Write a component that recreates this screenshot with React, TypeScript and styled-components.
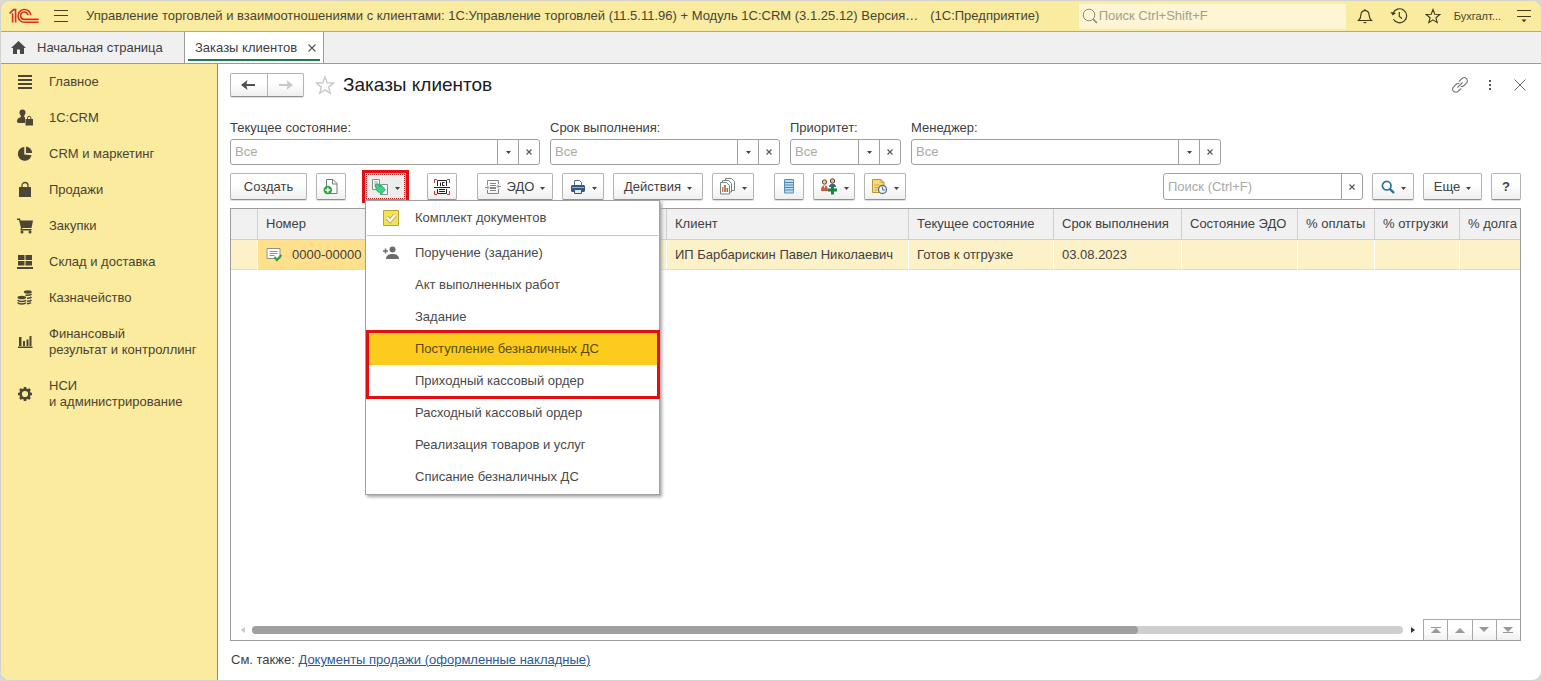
import React from 'react';
import styled, { createGlobalStyle, css } from 'styled-components';

const GlobalStyle = createGlobalStyle`
  * { box-sizing: border-box; }
  body {
    margin: 0;
    background: #d6d9d0;
    font-family: "Liberation Sans", Arial, sans-serif;
    font-size: 13px;
    line-height: 16px;
    color: #404040;
  }
  button, input { font: inherit; color: inherit; }
  svg { display: block; flex: none; }
`;

const Window = styled.div`
  display: flex;
  flex-direction: column;
  min-height: 100vh;
  border: 1px solid #d3d3cc;
  border-radius: 10px;
  overflow: hidden;
  background: #fff;
`;

const TitleBar = styled.header`
  display: flex;
  align-items: center;
  height: 31px;
  padding: 0 9px 0 8px;
  background: #f9eb9f;
  border-bottom: 1px solid #b5aa72;
`;

const PlainButton = styled.button`
  display: flex;
  align-items: center;
  justify-content: center;
  padding: 0;
  border: 0;
  background: none;
`;

const MenuToggle = styled(PlainButton)`
  margin: 0 18px 0 15px;
`;

const AppTitle = styled.div`
  flex: 1;
  display: flex;
  gap: 12px;
  min-width: 0;
  overflow: hidden;
  white-space: nowrap;
  color: #4a4432;
`;

const GlobalSearch = styled.label`
  display: flex;
  align-items: center;
  width: 267px;
  height: 25px;
  padding-left: 3px;
  background: #fdf5d3;
  input {
    flex: 1;
    min-width: 0;
    padding: 0 1px;
    border: 0;
    background: none;
    outline: 0;
  }
  input::placeholder { color: #a39f8c; opacity: 1; }
`;

const TitleTools = styled.div`
  display: flex;
  align-items: center;
  gap: 17px;
  margin-left: 11px;
`;

const UserButton = styled(PlainButton)`
  margin: 0 -2px 0 -4px;
  font-size: 11px;
  color: #4a4432;
`;

const TabBar = styled.nav`
  display: flex;
  height: 32px;
  background: #f1f0f0;
  border-bottom: 1px solid #9a9a9a;
`;

const HomeTab = styled(PlainButton)`
  width: 183px;
  justify-content: flex-start;
  gap: 11px;
  padding-left: 10px;
`;

const ActiveTab = styled.div`
  display: flex;
  align-items: center;
  justify-content: space-between;
  width: 140px;
  padding: 0 7px 0 10px;
  position: relative;
  background: #fff;
  border: solid #9a9a9a;
  border-width: 0 1px;
  white-space: nowrap;
  &::after {
    content: "";
    position: absolute;
    left: 3px;
    right: 3px;
    bottom: 2px;
    height: 2px;
    background: #1d7d50;
  }
`;

const Body = styled.div`
  flex: 1;
  display: flex;
`;

const Sidebar = styled.nav`
  flex: none;
  width: 217px;
  background: #faeb9f;
  border-right: 1px solid #8f8a6c;
`;

const SideItem = styled.a`
  display: flex;
  align-items: center;
  gap: 15px;
  padding: 10px 8px 10px 15px;
  color: #4a4330;
  text-decoration: none;
  white-space: pre-line;
  svg { margin: -1px 0; }
`;

const Main = styled.main`
  flex: 1;
  display: flex;
  flex-direction: column;
  min-width: 0;
  padding: 9px 20px 12px 12px;
`;

const PageHead = styled.div`
  display: flex;
  align-items: center;
  height: 24px;
`;

const raised = css`
  border: 1px solid #b4b4b4;
  border-bottom-color: #909090;
  border-radius: 2px;
  background: linear-gradient(#fff 40%, #efefef);
  box-shadow: 0 1px 1px #dcdcdc;
`;

const NavPair = styled.div`
  display: flex;
  width: 74px;
  height: 24px;
  ${raised}
`;

const NavButton = styled(PlainButton)`
  flex: 1;
  & + & { border-left: 1px solid #b4b4b4; }
`;

const FavButton = styled(PlainButton)`
  margin: 0 8px 0 11px;
`;

const PageTitle = styled.h1`
  flex: 1;
  margin: 0;
  font-size: 19px;
  line-height: 24px;
  font-weight: 400;
  color: #1c1c1c;
`;

const HeadTools = styled.div`
  display: flex;
  gap: 14px;
  margin-right: -7px;
  button { width: 16px; }
`;

const Filters = styled.div`
  display: flex;
  gap: 10px;
  margin-top: 23px;
`;

const Filter = styled.div<{ $w: number }>`
  display: flex;
  flex-direction: column;
  gap: 3px;
  width: ${p => p.$w}px;
  white-space: nowrap;
`;

const FieldBox = styled.div<{ $h: number }>`
  display: flex;
  width: 100%;
  height: ${p => p.$h}px;
  border: 1px solid #a0a0a0;
  border-radius: 3px;
  background: #fff;
  input {
    flex: 1;
    min-width: 0;
    padding: 0 4px;
    border: 0;
    background: none;
    outline: 0;
  }
  input::placeholder { color: #a9a9a9; opacity: 1; }
  button {
    width: 21px;
    border-left: 1px solid #a0a0a0;
  }
`;

const Toolbar = styled.div`
  display: flex;
  align-items: center;
  gap: 9px;
  height: 27px;
  margin-top: 8px;
`;

const Group = styled.div<{ $before?: number }>`
  display: flex;
  gap: 9px;
  margin-left: ${p => p.$before ?? 0}px;
`;

const ToolButton = styled.button<{ $w: number; $focused?: boolean }>`
  display: flex;
  align-items: center;
  justify-content: center;
  gap: 6px;
  width: ${p => p.$w}px;
  height: 27px;
  padding: 0;
  white-space: nowrap;
  ${raised}
  ${p => p.$focused && css`
    background: #ededed;
    box-shadow: none;
    outline: 1px dotted #b02020;
    outline-offset: -2px;
  `}
`;

const Highlight = styled.div`
  position: relative;
  margin: -3px -1px -3px 7px;
  border: 3px solid #e00f12;
`;

const ToolSearch = styled.div`
  width: 200px;
  margin-left: auto;
`;

const Menu = styled.div`
  position: absolute;
  z-index: 5;
  top: 27px;
  left: 0;
  width: 295px;
  padding: 1px;
  background: #fff;
  border: 1px solid #a0a0a0;
  box-shadow: 2px 2px 3px #a8a8a8;
`;

const MenuItem = styled.button<{ $active?: boolean }>`
  display: flex;
  align-items: center;
  width: 100%;
  height: 32px;
  padding: 0;
  border: 0;
  text-align: left;
  background: ${p => (p.$active ? '#fbcb1e' : 'none')};
  color: ${p => (p.$active ? '#5a4a10' : '#4a4a4a')};
`;

const MenuIcon = styled.span`
  flex: none;
  width: 48px;
  display: flex;
  justify-content: center;
`;

const Separator = styled.hr`
  height: 1px;
  margin: 1px 0;
  border: 0;
  background: #c4c4c4;
`;

const Marked = styled.div`
  position: relative;
  &::after {
    content: "";
    position: absolute;
    inset: -3px -2px -2px -1px;
    border: 3px solid #e00f12;
    pointer-events: none;
  }
`;

const ListPanel = styled.section`
  flex: 1;
  display: flex;
  flex-direction: column;
  margin-top: 8px;
  border: 1px solid #9c9c9c;
  overflow: hidden;
`;

const Grid = styled.table`
  width: 100%;
  table-layout: fixed;
  border-collapse: separate;
  border-spacing: 0;
  th, td {
    height: 31px;
    padding: 0 0 0 8px;
    overflow: hidden;
    white-space: nowrap;
    text-align: left;
    font-weight: 400;
    border-right: 1px solid #fff;
  }
  th {
    background: #f2f1f2;
    border-right-color: #cfcfcf;
    border-bottom: 1px solid #d0d0d0;
  }
  td {
    height: 30px;
    background: #fdf1c8;
    border-bottom: 1px solid #e2dcc8;
  }
  th:last-child, td:last-child { border-right: 0; }
`;

const CurrentCell = styled.td`
  && { background: #ffe08d; }
`;

const CellContent = styled.span`
  display: flex;
  align-items: center;
  gap: 10px;
`;

const ScrollRow = styled.div`
  display: flex;
  align-items: center;
  height: 21px;
  margin-top: auto;
  padding-left: 8px;
`;

const Track = styled.div`
  flex: 1;
  height: 8px;
  margin: 0 7px 0 6px;
  border-radius: 4px;
  background: #d0cfd0;
`;

const Thumb = styled.div`
  width: 77%;
  height: 8px;
  border-radius: 4px;
  background: #a09fa0;
`;

const Pager = styled.div`
  display: grid;
  grid-template-columns: repeat(4, 1fr);
  width: 97px;
  height: 21px;
  margin-left: 7px;
  border-top: 1px solid #a8a8a8;
  button {
    border-left: 1px solid #a8a8a8;
    background: linear-gradient(#fff 40%, #f0f0f0);
  }
`;

const SeeAlso = styled.p`
  margin: 11px 0 0 1px;
  a { color: #2a5a94; }
`;

const Logo = () => (
  <svg width="30" height="16" viewBox="0 0 30 16" fill="none" stroke="#d5311d" strokeWidth="1.6">
    <path d="M.6 5.4 4.6 1.6h2v13M3.6 5.2v9.4" />
    <path d="M21.8 7.2A6.4 6.4 0 1 0 15.4 14.3H29.6" />
    <path d="M19 7.2A3.7 3.7 0 1 0 15.4 11.4H29.6" />
  </svg>
);
const Lines = () => (
  <svg width="14" height="14" viewBox="0 0 14 14" stroke="#4a4020" strokeWidth="1"><path d="M0 1.5h14M0 6.500h14M0 12.500h14" /></svg>
);
const Lens = () => (
  <svg width="16" height="16" viewBox="0 0 16 16" fill="none" stroke="#8d8a78"><circle cx="7" cy="7" r="5.8" /><path d="m11 11 4 4" strokeWidth="1.6" /></svg>
);
const Bell = () => (
  <svg width="16" height="16" viewBox="0 0 16 16" fill="none" stroke="#40391c" strokeWidth="1.2">
    <path d="M1.5 12.5h13c-2-1.6-2.2-3-2.4-5.5C11.9 4.2 10.6 2.7 8 2.7S4.100 4.200 3.900 7c-.2 2.500-.4 3.900-2.400 5.500zM8 1v2" />
    <path d="M6 14h4l-2 1.600z" fill="#40391c" stroke="none" />
  </svg>
);
const History = () => (
  <svg width="18" height="16" viewBox="0 0 18 16" fill="none" stroke="#40391c" strokeWidth="1.2">
    <path d="M3 5.5A7 7 0 1 1 3.500 11.200M9.300 4v4.500l2.700 2" /><path d="m.5 4 2.200 3.500L6 5z" fill="#40391c" stroke="none" />
  </svg>
);
const Star = ({ size = 16, color = '#40391c' }: { size?: number; color?: string }) => (
  <svg width={size} height={size} viewBox="0 0 16 16" fill="none" stroke={color} strokeWidth="1.1" strokeLinejoin="miter">
    <path d="m8 1.500 1.800 4.700 5 .3-3.900 3.200 1.300 4.900L8 11.900l-4.200 2.700 1.300-4.900L1.200 6.500l5-.3z" />
  </svg>
);
const ServiceMenu = () => (
  <svg width="16" height="14" viewBox="0 0 16 14"><path d="M1 1.500h14M1 7.500h14" stroke="#40391c" /><path d="M5.500 10.500h5L8 13.300z" fill="#40391c" /></svg>
);
const Home = () => (
  <svg width="15" height="13" viewBox="0 0 15 13" fill="#484848"><path d="M7.500 0 15 7h-2v6H9V8.500H6V13H2V7H0z" /></svg>
);
const Cross = ({ size = 8, color = '#555', w = 1.1 }: { size?: number; color?: string; w?: number }) => (
  <svg width={size} height={size} viewBox={`0 0 ${size} ${size}`} stroke={color} strokeWidth={w}><path d={`M.5.5l${size - 1} ${size - 1}M${size - .5}.5l-${size - 1} ${size - 1}`} /></svg>
);
const Arrow = ({ left = false }: { left?: boolean }) => (
  <svg width="15" height="12" viewBox="0 0 15 12" fill={left ? '#505050' : '#c9c9c9'} transform={left ? undefined : 'scale(-1 1)'}>
    <path d="M0 6 6.500 1 5.500 4.900H14v2.200H5.500L6.500 11z" />
  </svg>
);
const Link = () => (
  <svg width="18" height="18" viewBox="0 0 24 24" fill="none" stroke="#777" strokeWidth="1.500" strokeLinecap="round">
    <path d="m9 15 6-6M11 7l3.500-3.500a4.200 4.200 0 0 1 6 6L17 13a4 4 0 0 1-3.500 1M13 17l-3.500 3.500a4.200 4.200 0 0 1-6-6L7 11a4 4 0 0 1 3.500-1" />
  </svg>
);
const Dots = () => (
  <svg width="14" height="14" viewBox="0 0 14 14" fill="#555"><path d="M6 2h2v2H6zM6 6h2v2H6zM6 10h2v2H6z" /></svg>
);
const Caret = () => (
  <svg width="5" height="3" viewBox="0 0 5 3" fill="#444"><path d="M0 0h5L2.500 3z" /></svg>
);
const ButtonCaret = styled(({ className }: { className?: string }) => (
  <span className={className}><Caret /></span>
))`
  padding-top: 4px;
`;

const sideIcons: Record<string, React.ReactNode> = {
  main: <path d="M2 2h14v2H2zM2 6h14v2H2zM2 10h14v2H2zM2 14h14v2H2z" />,
  crm: <><path d="M6.500.5a3 3 0 0 1 3 3c0 1.300-.6 2.300-1.300 3v1.300L9 8.200V14H2.500C1.500 14 1 13 1 12c0-2 1.500-3.300 3.800-4V6.500c-.8-.7-1.300-1.700-1.300-3a3 3 0 0 1 3-3z" /><path d="M9.500 10h7.500v6.500H9.500z" /><path d="M11.500 11V9a1.700 1.700 0 0 1 3.400 0v2" fill="none" stroke="#4d4536" /></>,
  pie: <><path d="M8.300 2a6.900 6.900 0 1 0 7.200 8.300L8.300 9.500z" /><path d="M10 1.500a6.600 6.600 0 0 1 6 6.500h-6z" /></>,
  bag: <><path d="M3 6h12v10H3z" /><path d="M6 8V4.500a3 3 0 0 1 6 0V8" fill="none" stroke="#4d4536" strokeWidth="1.3" /></>,
  cart: <><path d="M1 1.500h3l.6 2H17L15.500 11H6.200L6 12h9.500v1.500H4.400l.5-2.700L3 3H1z" /><circle cx="6" cy="15" r="1.500" /><circle cx="14" cy="15" r="1.500" /></>,
  stock: <path d="M2 2h6.500v5H2zM9.500 2H16v5H9.500zM2 8h6.500v4.500H2zM9.500 8H16v4.500H9.500zM1 14h16v2H1z" />,
  coins: <><ellipse cx="11.800" cy="3" rx="4" ry="1.700" /><ellipse cx="5.800" cy="8.500" rx="4.300" ry="1.800" /><path d="M15.500 5c-.8 1-3 1.400-6 1.200M15.500 8c-.7.9-2.300 1.300-4.500 1.300M15.500 11c-.7.9-2.300 1.300-4.500 1.300M1.700 11c1 1.900 7.200 1.900 8.200 0M1.700 13.500c1 1.900 7.200 1.900 8.200 0M11 14.600c2 0 3-.3 4-1" fill="none" stroke="#4d4536" strokeWidth="1.600" /></>,
  chart: <path d="M3 4h2.500v9H3zM7 8h2v5H7zM10.500 6.500h2V13h-2zM13.500 3h2v10h-2zM2 13.500h14.500V15H2z" />,
  gear: <><circle cx="9" cy="9" r="4.400" fill="none" stroke="#4d4536" strokeWidth="2.600" /><path d="M9 2V5M9 13v3M2 9H5M13 9h3M4 4l2 2M12 12l2 2M14 4l-2 2M6 12l-2 2" stroke="#4d4536" strokeWidth="2.600" /></>,
};
const SideIcon = ({ name }: { name: string }) => (
  <svg width="18" height="18" viewBox="0 0 18 18" fill="#4d4536">{sideIcons[name]}</svg>
);

const AddDoc = () => (
  <svg width="16" height="18" viewBox="0 0 16 18"><path d="M3.500 1.500h6.500l4 4v10h-10.500z" fill="#fff" stroke="#6e7f77" /><path d="M9.500 1.500V6H14" fill="none" stroke="#6e7f77" /><circle cx="4.800" cy="12" r="4.300" fill="#2ca33c" /><path d="M4.800 9.500v5M2.300 12h5" stroke="#fff" strokeWidth="1.500" /></svg>
);
const CreateFrom = () => (
  <svg width="18" height="18" viewBox="0 0 18 18"><path d="M1.500 1.500h7v10h-7z" fill="#fff" stroke="#7f8f88" /><path d="M3 4h4M3 6h4M3 8h2" stroke="#a5b0ab" /><path d="M10.500 6.500h6v10h-6z" fill="#fff" stroke="#7f8f88" /><path d="M4.500 6h3c0 1.500.5 2.500 2 2.500V6.500l5 5.200-5 5.300v-2.500C6 14.500 4.200 11 4.500 6z" fill="#3fd083" stroke="#26a465" strokeWidth=".8" /></svg>
);
const Barcode = () => (
  <svg width="18" height="18" viewBox="0 0 18 18" fill="none" stroke="#222"><path d="M4.500 8V2.500h9V8M4.500 11v4.500h9V11M1 9.500h16M6 11.500h6M6 13.500h6" /><path d="M7.500 4.500V8M11.500 4.500h-2v3h2" /><path d="M4 1.500H1.500V5M14 1.500h2.500V5M4 16.500H1.500V13M14 16.500h2.500V13" stroke="#c73838" /></svg>
);
const Edo = () => (
  <svg width="16" height="16" viewBox="0 0 16 16" fill="none" stroke="#858585"><path d="M2.500 6V1.500h11V5M2.500 11v3.500h11V10M5 4.500h6M5 6.500h6M5 9.500h6M5 11.500h6M0 8.500h3M13 7.500h3M5 8.500h6" /><path d="m2 6.500 2 2-2 2M14 5.500l-2 2 2 2" /></svg>
);
const Printer = () => (
  <svg width="16" height="16" viewBox="0 0 16 16"><path d="M4.500 1.500h5l2 2V7h-7z" fill="#fff" stroke="#53718f" /><path d="M2 6h12l1 1v5l-1 1H2l-1-1V7z" fill="#34597f" /><path d="M2 8.500h12" stroke="#8fb3d2" /><path d="M4.500 10.500h7v4h-7z" fill="#dcebf7" stroke="#35597d" /></svg>
);
const Reports = () => (
  <svg width="17" height="17" viewBox="0 0 17 17" fill="#fff" stroke="#77857e"><path d="M6.500.5h6l3 3v9h-9z" /><path d="M3.500 2.500h6l3 3v8.500h-9z" /><path d="M1.500 4.500h6l3 3v8.500h-9z" /><path d="M3.700 9v5" stroke="#d3803a" strokeWidth="1.500" /><path d="M6 7v7" stroke="#c2463c" strokeWidth="1.500" /><path d="M8.300 10v4" stroke="#3f9a4a" strokeWidth="1.500" /></svg>
);
const ListIcon = () => (
  <svg width="12" height="15" viewBox="0 0 12 15"><path d="M1.500.5h9v13.500h-9z" fill="#b9dcf3" stroke="#5b93b8" /><path d="M1.500 3.500h9M1.500 6h9M1.500 8.500h9M1.500 11h9" stroke="#5688ad" /></svg>
);
const People = () => (
  <svg width="18" height="17" viewBox="0 0 18 17"><circle cx="4.500" cy="4" r="2.200" fill="#efc18f" stroke="#6d4929" /><circle cx="12.500" cy="3" r="2.200" fill="#efc18f" stroke="#54391f" /><path d="M1 13c0-4 1.500-6 3.500-6S8 9 8 13z" fill="#c65a42" /><path d="M9 9c0-2 1.500-3.200 3.500-3.200S16 7 16 9z" fill="#405f8d" /><path d="M3.500 7.500h2l-1 3z" fill="#fff" /><path d="M12.500 7.500v9M8 12h9" stroke="#168540" strokeWidth="3" /></svg>
);
const NoteClock = () => (
  <svg width="17" height="17" viewBox="0 0 17 17"><path d="M1.500 1.500h8.500l3 3v10h-11.500z" fill="#f8da76" stroke="#b8943d" /><path d="M10 1.500v3h3M3.500 7h5M3.500 9.500h4M3.500 12h3" fill="none" stroke="#c9a348" /><circle cx="11.500" cy="11.500" r="4" fill="#eef4fa" stroke="#58718c" strokeWidth="1.300" /><path d="M11.500 9v3H14" fill="none" stroke="#58718c" /></svg>
);
const BlueLens = () => (
  <svg width="14" height="14" viewBox="0 0 14 14" fill="none" stroke="#2c7097"><circle cx="5.700" cy="5.700" r="4.300" strokeWidth="1.700" /><path d="m8.800 8.800 4.200 4.200" strokeWidth="2.400" /></svg>
);
const YellowCheck = () => (
  <svg width="16" height="16" viewBox="0 0 16 16"><path d="M.5.5h15v15H.5z" fill="#f5e44f" stroke="#b5a33e" /><path d="m4 7.500 3.200 3.300L12 5" fill="none" stroke="#a49a70" strokeWidth="4" /><path d="m4 7.500 3.200 3.300L12 5" fill="none" stroke="#fffdf0" strokeWidth="2.500" /></svg>
);
const AddPerson = () => (
  <svg width="16" height="14" viewBox="0 0 16 14" fill="#6b6b6b"><circle cx="9.500" cy="3.500" r="3" /><path d="M3 13c0-3.500 2.500-5 6.500-5s6.500 1.500 6.500 5z" /><path d="M2.500 2.500v5M0 5h5" stroke="#6b6b6b" strokeWidth="1.400" /></svg>
);
const OrderIcon = () => (
  <svg width="16" height="15" viewBox="0 0 16 15" fill="none"><path d="M1 1.500h13v10H1z" fill="#fff" stroke="#8b9487" /><path d="M3.500 4.500h8M3.500 6.500h8M3.500 8.500h5" stroke="#8b9487" /><path d="m8.500 10 2.500 3 4.500-5" stroke="#35a045" strokeWidth="2.200" /></svg>
);
const PageMark = ({ down = false, bar = false }: { down?: boolean; bar?: boolean }) => (
  <svg width="12" height="8" viewBox="0 0 12 8" fill="#999">
    <path d={down ? 'M1 1h10L6 6z' : 'M1 7h10L6 2z'} />
    {bar && <path d={down ? 'M1 6h10v1H1z' : 'M1 1h10v1H1z'} />}
  </svg>
);

const sections: [string, string][] = [
  ['main', 'Главное'], ['crm', '1С:CRM'], ['pie', 'CRM и маркетинг'], ['bag', 'Продажи'],
  ['cart', 'Закупки'], ['stock', 'Склад и доставка'], ['coins', 'Казначейство'],
  ['chart', 'Финансовый\nрезультат и контроллинг'], ['gear', 'НСИ\nи администрирование'],
];

const filters: [string, string, number][] = [
  ['state', 'Текущее состояние:', 310], ['due', 'Срок выполнения:', 230],
  ['priority', 'Приоритет:', 111], ['manager', 'Менеджер:', 310],
];

const columns: [string, number | undefined][] = [
  ['', 27], ['Номер', 120], ['', 289], ['Клиент', undefined], ['Текущее состояние', 145],
  ['Срок выполнения', 128], ['Состояние ЭДО', 116], ['% оплаты', 77], ['% отгрузки', 85], ['% долга', 60],
];

export default function App() {
  return (
    <>
      <GlobalStyle />
      <Window>
        <TitleBar>
          <Logo />
          <MenuToggle aria-label="Меню"><Lines /></MenuToggle>
          <AppTitle>
            <span>Управление торговлей и взаимоотношениями с клиентами: 1С:Управление торговлей (11.5.11.96) + Модуль 1С:CRM (3.1.25.12) Версия…</span>
            <span>(1С:Предприятие)</span>
          </AppTitle>
          <GlobalSearch>
            <Lens />
            <input aria-label="Поиск" placeholder="Поиск Ctrl+Shift+F" />
          </GlobalSearch>
          <TitleTools>
            <PlainButton aria-label="Уведомления"><Bell /></PlainButton>
            <PlainButton aria-label="История"><History /></PlainButton>
            <PlainButton aria-label="Избранное"><Star /></PlainButton>
            <UserButton>Бухгалт...</UserButton>
            <PlainButton aria-label="Сервис"><ServiceMenu /></PlainButton>
          </TitleTools>
        </TitleBar>
        <TabBar>
          <HomeTab><Home />Начальная страница</HomeTab>
          <ActiveTab>
            <span>Заказы клиентов</span>
            <PlainButton aria-label="Закрыть вкладку"><Cross /></PlainButton>
          </ActiveTab>
        </TabBar>
        <Body>
          <Sidebar>
            {sections.map(([icon, text]) => (
              <SideItem key={icon} href="#"><SideIcon name={icon} /><span>{text}</span></SideItem>
            ))}
          </Sidebar>
          <Main>
            <PageHead>
              <NavPair>
                <NavButton aria-label="Назад"><Arrow left /></NavButton>
                <NavButton aria-label="Вперед"><Arrow /></NavButton>
              </NavPair>
              <FavButton aria-label="В избранное"><Star size={20} color="#c8c8c8" /></FavButton>
              <PageTitle>Заказы клиентов</PageTitle>
              <HeadTools>
                <PlainButton aria-label="Ссылка"><Link /></PlainButton>
                <PlainButton aria-label="Еще"><Dots /></PlainButton>
                <PlainButton aria-label="Закрыть"><Cross size={12} color="#666" w={1} /></PlainButton>
              </HeadTools>
            </PageHead>
            <Filters>
              {filters.map(([id, label, w]) => (
                <Filter key={id} $w={w}>
                  <label htmlFor={id}>{label}</label>
                  <FieldBox $h={26}>
                    <input id={id} placeholder="Все" />
                    <PlainButton aria-label="Выбрать"><Caret /></PlainButton>
                    <PlainButton aria-label="Очистить"><Cross size={6} /></PlainButton>
                  </FieldBox>
                </Filter>
              ))}
            </Filters>
            <Toolbar>
              <ToolButton $w={77}>Создать</ToolButton>
              <ToolButton $w={30} aria-label="Создать копированием"><AddDoc /></ToolButton>
              <Highlight>
                <ToolButton $w={41} $focused aria-label="Создать на основании" aria-expanded="true"><CreateFrom /><ButtonCaret /></ToolButton>
                <Menu role="menu">
                  <MenuItem role="menuitem"><MenuIcon><YellowCheck /></MenuIcon>Комплект документов</MenuItem>
                  <Separator />
                  <MenuItem role="menuitem"><MenuIcon><AddPerson /></MenuIcon>Поручение (задание)</MenuItem>
                  <MenuItem role="menuitem"><MenuIcon />Акт выполненных работ</MenuItem>
                  <MenuItem role="menuitem"><MenuIcon />Задание</MenuItem>
                  <Marked>
                    <MenuItem role="menuitem" $active><MenuIcon />Поступление безналичных ДС</MenuItem>
                    <MenuItem role="menuitem"><MenuIcon />Приходный кассовый ордер</MenuItem>
                  </Marked>
                  <MenuItem role="menuitem"><MenuIcon />Расходный кассовый ордер</MenuItem>
                  <MenuItem role="menuitem"><MenuIcon />Реализация товаров и услуг</MenuItem>
                  <MenuItem role="menuitem"><MenuIcon />Списание безналичных ДС</MenuItem>
                </Menu>
              </Highlight>
              <Group $before={10}>
                <ToolButton $w={30} aria-label="Штрихкод"><Barcode /></ToolButton>
              </Group>
              <Group $before={11}>
                <ToolButton $w={76}><Edo />ЭДО<ButtonCaret /></ToolButton>
                <ToolButton $w={42} aria-label="Печать"><Printer /><ButtonCaret /></ToolButton>
                <ToolButton $w={90}>Действия<ButtonCaret /></ToolButton>
                <ToolButton $w={42} aria-label="Отчеты"><Reports /><ButtonCaret /></ToolButton>
              </Group>
              <Group $before={11}>
                <ToolButton $w={30} aria-label="Список"><ListIcon /></ToolButton>
                <ToolButton $w={42} aria-label="Участники"><People /><ButtonCaret /></ToolButton>
                <ToolButton $w={42} aria-label="Напоминания"><NoteClock /><ButtonCaret /></ToolButton>
              </Group>
              <ToolSearch>
                <FieldBox $h={27}>
                  <input aria-label="Поиск в списке" placeholder="Поиск (Ctrl+F)" />
                  <PlainButton aria-label="Очистить поиск"><Cross size={6} /></PlainButton>
                </FieldBox>
              </ToolSearch>
              <ToolButton $w={42} aria-label="Найти"><BlueLens /><ButtonCaret /></ToolButton>
              <ToolButton $w={59}>Еще<ButtonCaret /></ToolButton>
              <ToolButton $w={30}><b>?</b></ToolButton>
            </Toolbar>
            <ListPanel>
              <Grid>
                <colgroup>
                  {columns.map(([, w], i) => <col key={i} width={w} />)}
                </colgroup>
                <thead>
                  <tr>{columns.map(([name], i) => <th key={i}>{name}</th>)}</tr>
                </thead>
                <tbody>
                  <tr>
                    <td />
                    <CurrentCell><CellContent><OrderIcon />0000-00000</CellContent></CurrentCell>
                    <td />
                    <td>ИП Барбарискин Павел Николаевич</td>
                    <td>Готов к отгрузке</td>
                    <td>03.08.2023</td>
                    <td /><td /><td /><td />
                  </tr>
                </tbody>
              </Grid>
              <ScrollRow>
                <svg width="7" height="8" viewBox="0 0 7 8" fill="#ccc"><path d="M6 1v6L1.500 4z" /></svg>
                <Track><Thumb /></Track>
                <svg width="6" height="8" viewBox="0 0 6 8" fill="#333"><path d="M1 1v6l4-3z" /></svg>
                <Pager>
                  <PlainButton aria-label="В начало"><PageMark bar /></PlainButton>
                  <PlainButton aria-label="Вверх"><PageMark /></PlainButton>
                  <PlainButton aria-label="Вниз"><PageMark down /></PlainButton>
                  <PlainButton aria-label="В конец"><PageMark down bar /></PlainButton>
                </Pager>
              </ScrollRow>
            </ListPanel>
            <SeeAlso>См. также: <a href="#">Документы продажи (оформленные накладные)</a></SeeAlso>
          </Main>
        </Body>
      </Window>
    </>
  );
}
